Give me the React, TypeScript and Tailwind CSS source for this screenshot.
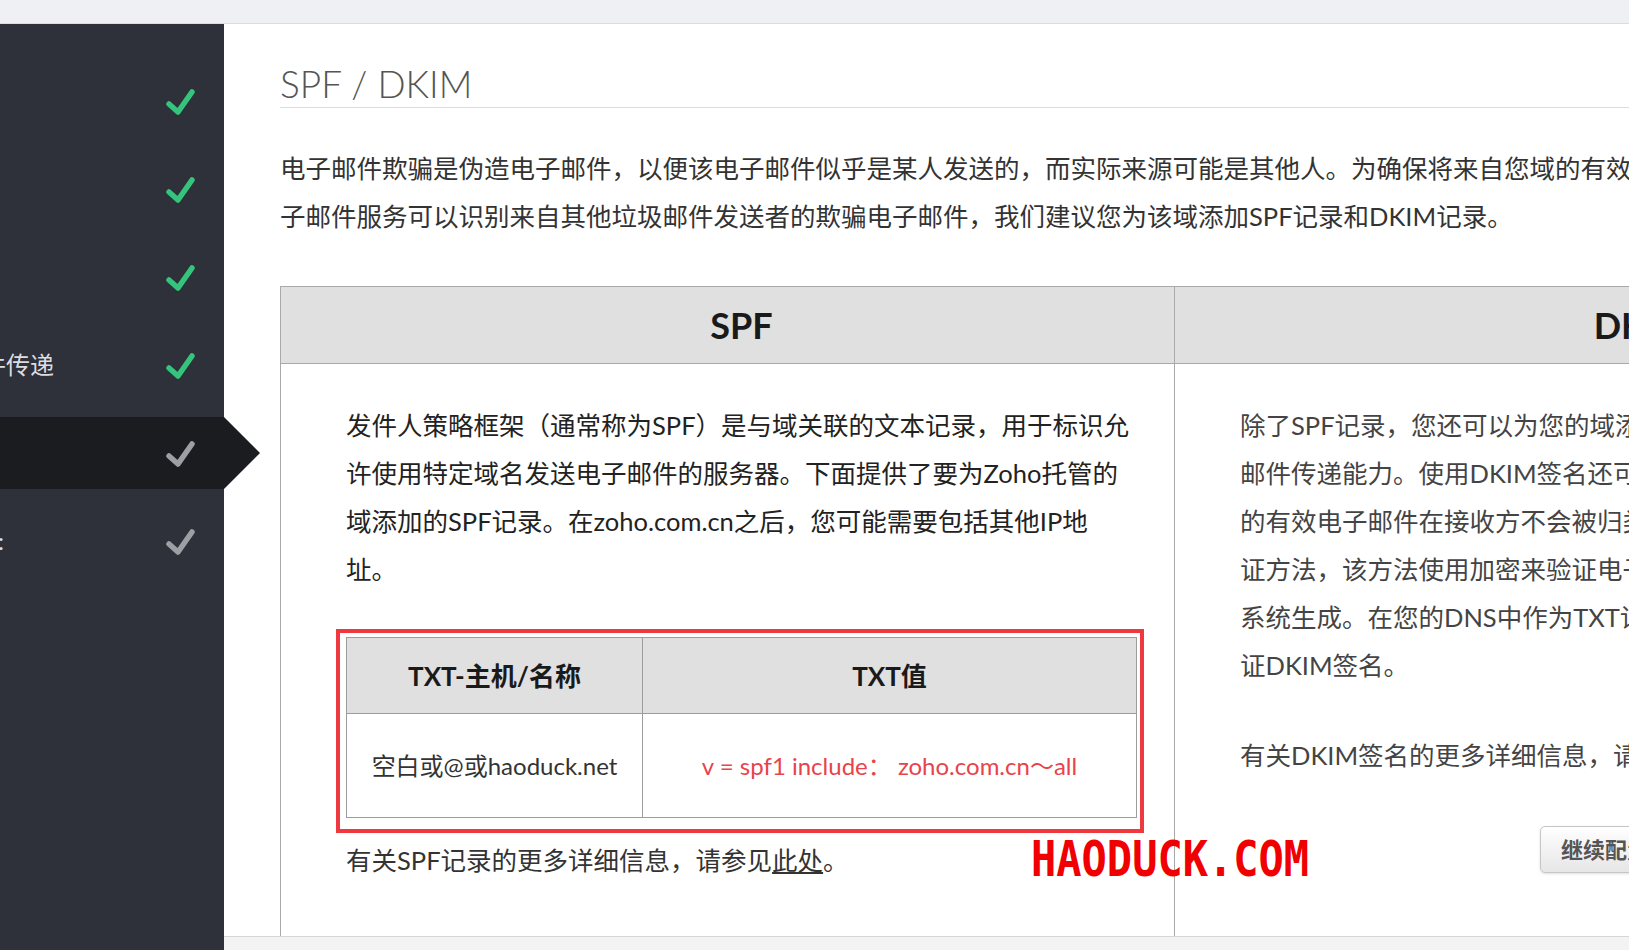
import React from "react";

const Check = ({ color }: { color: string }) => (
    <svg viewBox="0 0 30 30" className="w-[30px] h-[30px]" fill="none">
        <polyline points="4,18 13,26 27,6" stroke={color} strokeWidth="5.5" strokeLinecap="round" strokeLinejoin="round" />
    </svg>
);

const steps = [
    { label: "", clip: "w-[54px]", done: true },
    { label: "", clip: "w-[54px]", done: true },
    { label: "", clip: "w-[54px]", done: true },
    { label: "邮件传递", clip: "w-[54px]", done: true },
    { label: "", clip: "w-[54px]", done: false, active: true },
    { label: "DKIM:", clip: "w-[4px]", done: false },
];

const Sidebar = () => (
    <div className="w-[224px] shrink-0 bg-[#2e3139] pt-[41px] flex flex-col gap-[16px] relative z-10">
        {steps.map((s, i) => (
            <div key={i} className={"relative h-[72px] flex items-center " + (s.active ? "bg-[#1b1c20]" : "")}>
                <div className={s.clip + " shrink-0 flex justify-end overflow-hidden whitespace-nowrap text-[24px] text-[#dcdde0]"}>
                    {s.label}
                </div>
                <div className={s.clip === "w-[4px]" ? "ml-[161px]" : "ml-[111px]"}>
                    <Check color={s.done ? "#34c47c" : "#9c9fa4"} />
                </div>
                {s.active && (
                    <div className="absolute left-full top-0 w-0 h-0 border-y-[36px] border-y-transparent border-l-[36px] border-l-[#1b1c20]" />
                )}
            </div>
        ))}
    </div>
);

const SpfColumn = () => (
    <div className="w-[895px] shrink-0 border-l border-r border-[#a9a9a9] flex flex-col">
        <div className="h-[78px] bg-[#e0e0e0] border-t border-b border-[#a9a9a9] flex items-center justify-center pl-[28px] text-[36px] font-bold text-[#1a1a1a]">
            SPF
        </div>
        <div className="px-[65px] pt-[37px] text-[25.5px] leading-[48px] text-[#222] whitespace-nowrap">
            <p>
                发件人策略框架（通常称为SPF）是与域关联的文本记录，用于标识允<br />
                许使用特定域名发送电子邮件的服务器。下面提供了要为Zoho托管的<br />
                域添加的SPF记录。在zoho.com.cn之后，您可能需要包括其他IP地<br />
                址。
            </p>
            <div className="relative mt-[44px] w-[791px]">
                <div className="border border-[#9c9c9c] grid grid-cols-[296px_1fr]">
                    <div className="h-[76px] bg-[#e0e0e0] border-b border-r border-[#9c9c9c] flex items-center justify-center font-bold text-[26px] text-[#1a1a1a]">
                        TXT-主机/名称
                    </div>
                    <div className="h-[76px] bg-[#e0e0e0] border-b border-[#9c9c9c] flex items-center justify-center font-bold text-[26px] text-[#1a1a1a]">
                        TXT值
                    </div>
                    <div className="h-[103px] border-r border-[#9c9c9c] flex items-center justify-center text-[24px] text-[#333]">
                        空白或@或haoduck.net
                    </div>
                    <div className="h-[103px] flex items-center justify-center text-[24px] text-[#e8434b]">
                        v = spf1 include：&nbsp;zoho.com.cn～all
                    </div>
                </div>
                <div className="absolute -left-[10px] -top-[8px] -right-[7px] -bottom-[15px] border-4 border-[#ee3a3f]" />
            </div>
            <p className="mt-[18px] text-[#333]">
                有关SPF记录的更多详细信息，请参见<span className="underline">此处</span>。
            </p>
        </div>
    </div>
);

const DkimColumn = () => (
    <div className="w-[920px] shrink-0 border-r border-[#a9a9a9] flex flex-col">
        <div className="h-[78px] bg-[#e0e0e0] border-t border-b border-[#a9a9a9] flex items-center justify-center pl-[15px] text-[36px] font-bold text-[#1a1a1a]">
            DKIM
        </div>
        <div className="px-[65px] pt-[37px] text-[25.5px] leading-[48px] text-[#444] whitespace-nowrap">
            <p>
                除了SPF记录，您还可以为您的域添加DKIM签名，以提高电子<br />
                邮件传递能力。使用DKIM签名还可以确保来自您的域<br />
                的有效电子邮件在接收方不会被归类为垃圾邮件。DKIM是一种电子邮件验<br />
                证方法，该方法使用加密来验证电子邮件的发件人。公钥和私钥由<br />
                系统生成。在您的DNS中作为TXT记录发布的公钥用于验<br />
                证DKIM签名。
            </p>
            <p className="mt-[42px]">有关DKIM签名的更多详细信息，请参见此处。</p>
            <button className="mt-[47px] ml-[300px] h-[47px] px-[20px] rounded-[5px] border border-[#c6c6c6] bg-gradient-to-b from-white to-[#e6e6e6] shadow-sm text-[22px] font-bold text-[#555] leading-none">
                继续配置
            </button>
        </div>
    </div>
);

export default function App() {
    return (
        <div className="w-[1629px] h-[950px] overflow-hidden flex flex-col bg-white relative font-['Lato','Noto_Sans_CJK_SC',sans-serif]">
            <div className="h-[24px] shrink-0 bg-[#eef0f3] border-b border-[#dadde1]" />
            <div className="flex flex-1 min-h-0">
                <Sidebar />
                <div className="flex-1 min-w-0 flex flex-col">
                    <div className="flex-1 min-h-0 overflow-hidden pl-[56px] flex flex-col">
                        <h1 className="mt-[40px] text-[37px] leading-[40px] pb-[3px] border-b border-[#dcdcdc] text-[#555] font-light">
                            SPF / DKIM
                        </h1>
                        <p className="mt-[36px] text-[25.5px] leading-[48px] text-[#333] whitespace-nowrap">
                            电子邮件欺骗是伪造电子邮件，以便该电子邮件似乎是某人发送的，而实际来源可能是其他人。为确保将来自您域的有效电子邮件传递到收件人，并使收件人电<br />
                            子邮件服务可以识别来自其他垃圾邮件发送者的欺骗电子邮件，我们建议您为该域添加SPF记录和DKIM记录。
                        </p>
                        <div className="mt-[46px] flex flex-1 min-h-0">
                            <SpfColumn />
                            <DkimColumn />
                        </div>
                    </div>
                    <div className="h-[14px] shrink-0 bg-[#f3f3f3] border-t border-[#d6d6d6]" />
                </div>
            </div>
            <div className="absolute left-[1031px] top-[834px] origin-top scale-y-[1.2] font-['DejaVu_Sans_Mono',monospace] font-bold text-[42px] leading-[42px] text-[#f00000] whitespace-nowrap">
                HAODUCK.COM
            </div>
        </div>
    );
}
